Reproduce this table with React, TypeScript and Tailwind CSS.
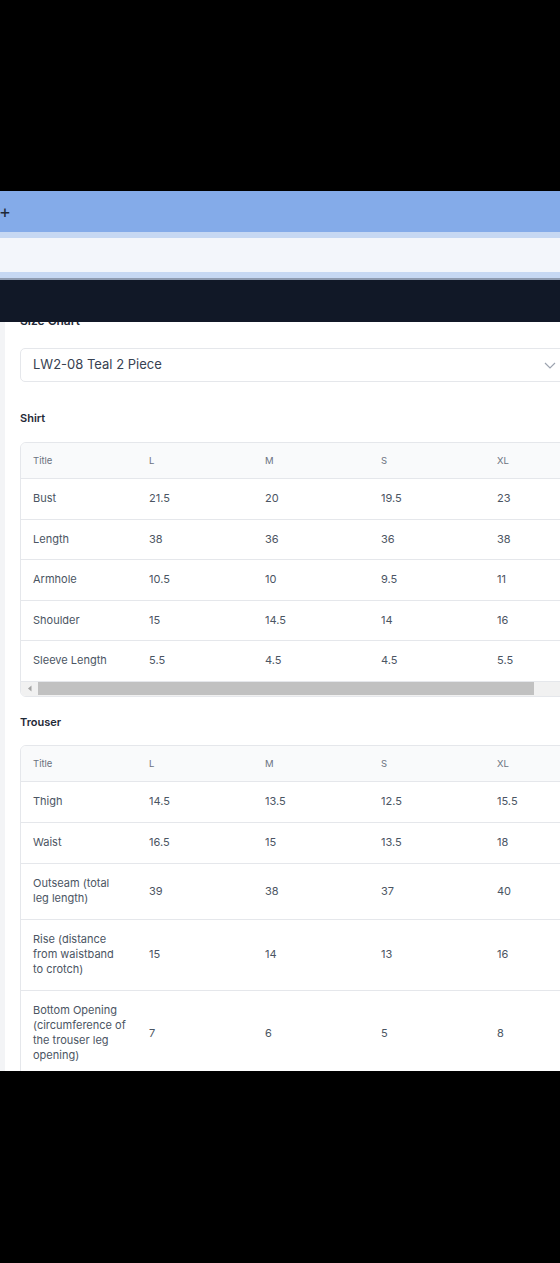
import React from "react";

type Row = [string[], string, string, string, string];

const shirt: Row[] = [
  [["Bust"], "21.5", "20", "19.5", "23"],
  [["Length"], "38", "36", "36", "38"],
  [["Armhole"], "10.5", "10", "9.5", "11"],
  [["Shoulder"], "15", "14.5", "14", "16"],
  [["Sleeve Length"], "5.5", "4.5", "4.5", "5.5"],
];

const trouser: Row[] = [
  [["Thigh"], "14.5", "13.5", "12.5", "15.5"],
  [["Waist"], "16.5", "15", "13.5", "18"],
  [["Outseam (total", "leg length)"], "39", "38", "37", "40"],
  [["Rise (distance", "from waistband", "to crotch)"], "15", "14", "13", "16"],
  [["Bottom Opening", "(circumference of", "the trouser leg", "opening)"], "7", "6", "5", "8"],
];

function SizeTable({ rows, scrollbar, pad }: { rows: Row[]; scrollbar?: boolean; pad: string }) {
  return (
    <div className="w-[560px] shrink-0 rounded-md border border-[#e5e7eb] overflow-hidden">
      <div className="w-[600px]">
        <div className="flex bg-[#f9fafb] border-b border-[#e5e7eb]">
          {["Title", "L", "M", "S", "XL"].map((h) => (
            <div key={h} className="w-[116px] shrink-0 px-3 py-[10px] text-[9.5px] leading-[15px] text-[#6b7280]">
              {h}
            </div>
          ))}
        </div>
        {rows.map((r, i) => (
          <div key={i} className={"flex items-center " + (i < rows.length - 1 ? "border-b border-[#e5e7eb]" : "")}>
            <div className={"w-[116px] shrink-0 px-3 text-[11px] leading-[15px] text-[#4b5563] flex flex-col " + pad}>
              {r[0].map((line, k) => (
                <span key={k} className="whitespace-nowrap">
                  {line}
                </span>
              ))}
            </div>
            {r.slice(1).map((c, j) => (
              <div key={j} className={"w-[116px] shrink-0 px-3 text-[11px] leading-[15px] text-[#4b5563] " + pad}>
                {c as string}
              </div>
            ))}
          </div>
        ))}
      </div>
      {scrollbar && (
        <div className="h-[15px] bg-[#f1f1f1] border-t border-[#e5e7eb] flex items-center">
          <div className="w-[17px] h-full flex items-center justify-center">
            <svg width="6" height="7" viewBox="0 0 6 7">
              <path d="M4.5 0.5 L1 3.5 L4.5 6.5 Z" fill="#a3a3a3" />
            </svg>
          </div>
          <div className="w-[496px] h-[13px] bg-[#c1c1c1]" />
        </div>
      )}
    </div>
  );
}

export default function App() {
  return (
    <div
      className="w-[560px] h-[1263px] bg-black flex flex-col overflow-hidden"
      style={{ fontFamily: "Inter, 'Noto Sans', sans-serif" }}
    >
      <div className="h-[191px] shrink-0 bg-black" />
      <div className="h-[41px] shrink-0 bg-[#84abe9] flex items-center">
        <span className="text-[18px] leading-none text-[#1f2937] -ml-[1px]">+</span>
      </div>
      <div className="h-[6px] shrink-0 bg-[#c6d8f3]" />
      <div className="h-[34px] shrink-0 bg-[#f3f6fb]" />
      <div className="h-[6px] shrink-0 bg-[#c6d8f3]" />
      <div className="h-[2px] shrink-0 bg-[#8e9bb0]" />
      <div className="h-[42px] shrink-0 bg-[#111827]" />
      <div className="h-[749px] shrink-0 bg-white flex overflow-hidden">
        <div className="w-[5px] shrink-0 bg-[#f3f4f6]" />
        <div className="flex-1 min-w-0 pl-[15px] flex flex-col">
          <div className="-mt-[9px] text-[12px] leading-[16px] font-semibold text-[#1f2937]">Size Chart</div>
          <div className="mt-[19px] w-[549px] shrink-0 h-[34px] rounded-[5px] border border-[#e5e7eb] flex items-center justify-between px-3">
            <span className="text-[13px] text-[#374151]">LW2-08 Teal 2 Piece</span>
            <svg width="12" height="7" viewBox="0 0 12 7" fill="none">
              <path d="M1 1 L6 6 L11 1" stroke="#9ca3af" strokeWidth="1.2" />
            </svg>
          </div>
          <div className="mt-[28px] text-[11px] leading-[16px] font-semibold text-[#1f2937]">Shirt</div>
          <div className="mt-[16px]">
            <SizeTable rows={shirt} scrollbar pad="py-[12.25px]" />
          </div>
          <div className="mt-[17px] text-[11px] leading-[16px] font-semibold text-[#1f2937]">Trouser</div>
          <div className="mt-[15px]">
            <SizeTable rows={trouser} pad="py-[12.5px]" />
          </div>
        </div>
      </div>
      <div className="flex-1 bg-black" />
    </div>
  );
}
